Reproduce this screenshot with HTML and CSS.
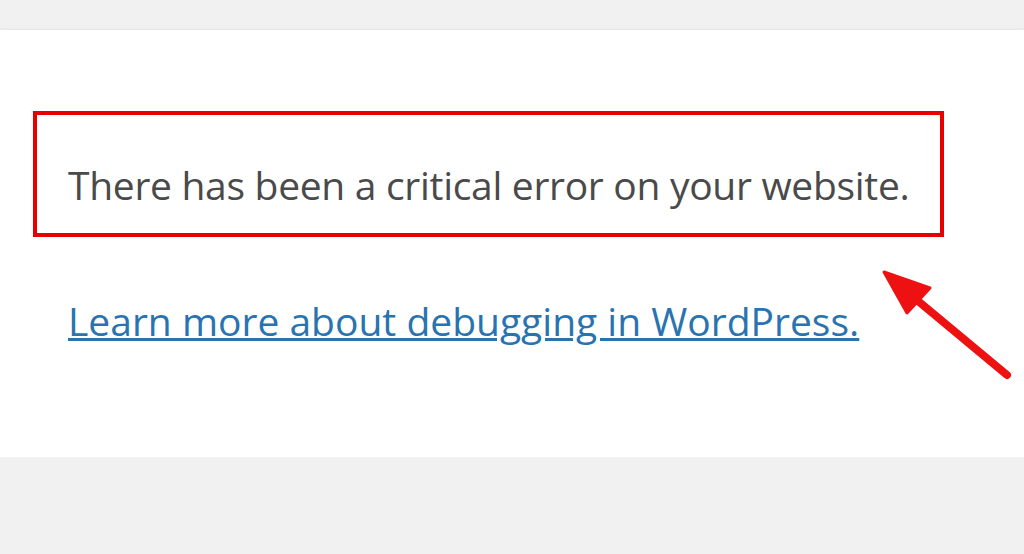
FILE: index.html
```html
<!DOCTYPE html>
<html lang="en">
<head>
    <meta charset="UTF-8">
    <meta name="viewport" content="width=device-width, initial-scale=1.0">
    <title>WordPress &rsaquo; Error</title>
    <link rel="stylesheet" href="styles.css">
</head>
<body>
    <div class="error-page">
        <div class="highlight">
            <p class="message">There has been a critical error on your website.</p>
        </div>
        <p class="more">
            <a href="#">Learn more about debugging in WordPress.</a>
        </p>

        <!-- annotation arrow -->
        <svg class="arrow" width="160" height="140" viewBox="0 0 160 140">
            <line x1="146" y1="122" x2="45" y2="38" stroke="#ee1111" stroke-width="8" stroke-linecap="round"/>
            <polygon points="23,19 69,35 46,60" fill="#ee1111" stroke="#ee1111" stroke-width="3" stroke-linejoin="round"/>
        </svg>
    </div>
</body>
</html>
```

FILE: styles.css
```css
html {
    background: #f1f1f1;
}
body {
    margin: 0;
    padding-top: 30px;
    font-family: 'Open Sans', 'Noto Sans', sans-serif;
    color: #4a4a4a;
}
.error-page {
    position: relative;
    background: #fff;
    height: 427px;
    box-sizing: border-box;
    padding: 81px 0 0 33px;
    box-shadow: 0 1px 4px rgba(0,0,0,0.15);
}
.highlight {
    width: 911px;
    height: 126px;
    box-sizing: border-box;
    border: 4px solid #e80000;
    padding: 50px 0 0 31px;
}
.message {
    margin: 0;
    font-size: 39px;
    line-height: 40px;
    letter-spacing: -0.3px;
    white-space: nowrap;
}
.more {
    margin: 64px 0 0 35px;
    font-size: 39px;
    line-height: 40px;
    white-space: nowrap;
}
.more a {
    color: #2873b0;
}
.arrow {
    position: absolute;
    left: 861px;
    top: 223px;
}
```
